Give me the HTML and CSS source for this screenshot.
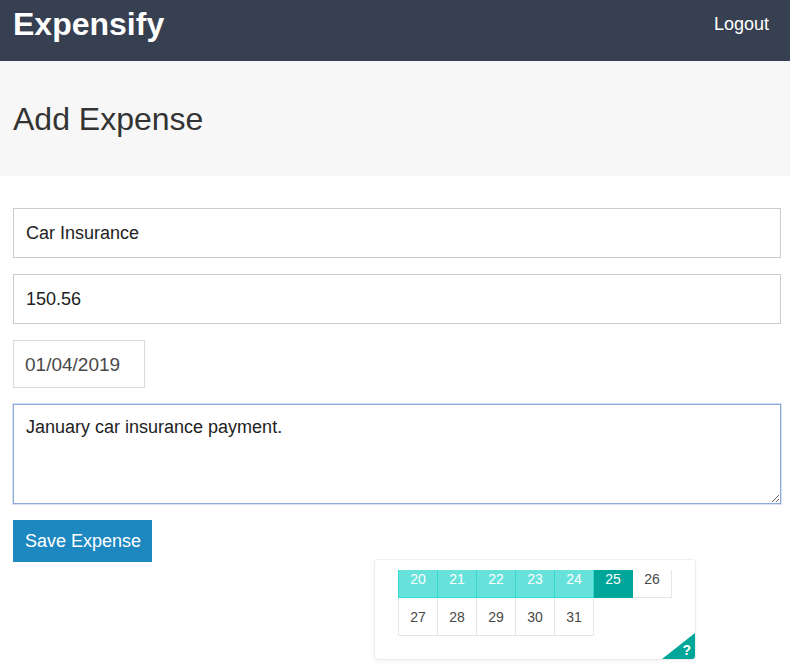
FILE: index.html
```html
<!DOCTYPE html>
<html>
<head>
<meta charset="utf-8">
<title>Expensify</title>
<link rel="stylesheet" href="styles.css">
</head>
<body>
<header class="header">
  <h1 class="brand">Expensify</h1>
  <button class="logout">Logout</button>
</header>
<div class="page-header">
  <h2 class="page-title">Add Expense</h2>
</div>
<form class="form">
  <input class="text-input" type="text" value="Car Insurance">
  <input class="text-input" type="text" value="150.56">
  <div class="date-picker">
    <input class="date-input" type="text" value="01/04/2019">
  </div>
  <textarea class="textarea">January car insurance payment.</textarea>
  <div class="actions">
    <button class="button" type="button">Save Expense</button>
  </div>
</form>
<div class="calendar">
  <div class="cal-clip">
    <table class="cal-table">
      <tr>
        <td class="day range">20</td>
        <td class="day range">21</td>
        <td class="day range">22</td>
        <td class="day range">23</td>
        <td class="day range">24</td>
        <td class="day selected">25</td>
        <td class="day">26</td>
      </tr>
      <tr>
        <td class="day">27</td>
        <td class="day">28</td>
        <td class="day">29</td>
        <td class="day">30</td>
        <td class="day">31</td>
        <td class="empty"></td>
        <td class="empty"></td>
      </tr>
    </table>
  </div>
  <div class="shortcut"><span class="shortcut-q">?</span></div>
</div>
</body>
</html>
```
FILE: styles.css
```css
html, body {
  margin: 0;
  padding: 0;
  background: #fff;
  font-family: "Liberation Sans", Arial, sans-serif;
  color: #333;
}

.header {
  height: 61px;
  box-sizing: border-box;
  background: #364051;
  display: flex;
  justify-content: space-between;
  align-items: flex-start;
  padding: 8px 21px 0 13px;
}

.brand {
  margin: 0;
  font-size: 32px;
  line-height: 32px;
  font-weight: bold;
  color: #fff;
}

.logout {
  margin-top: 7px;
  background: none;
  border: none;
  padding: 0;
  font-family: inherit;
  font-size: 18px;
  line-height: 18px;
  color: #fff;
}

.page-header {
  background: #f7f7f7;
  padding: 42px 13px 41px;
}

.page-title {
  margin: 0;
  font-size: 32px;
  line-height: 32px;
  font-weight: normal;
  color: #333;
}

.form {
  display: flex;
  flex-direction: column;
  gap: 16px;
  padding: 32px 9px 0 13px;
}

.text-input {
  height: 50px;
  box-sizing: border-box;
  border: 1px solid #cacccd;
  padding: 0 12px;
  font-family: inherit;
  font-size: 18px;
  color: #222;
  outline: none;
}

.date-picker {
  display: flex;
}

.date-input {
  width: 132px;
  height: 48px;
  box-sizing: border-box;
  border: 1px solid #dbdbdb;
  padding: 11px 11px 9px;
  font-family: inherit;
  font-size: 19px;
  line-height: 24px;
  color: #484848;
  outline: none;
}

.textarea {
  height: 100px;
  box-sizing: border-box;
  border: 1px solid #8eaadc;
  box-shadow: 0 0 0 1px rgba(142, 170, 220, 0.35);
  padding: 12px 12px;
  font-family: inherit;
  font-size: 18px;
  line-height: 21px;
  color: #222;
  outline: none;
  resize: vertical;
}

.actions {
  display: flex;
}

.button {
  height: 42px;
  background: #1c88bf;
  border: none;
  padding: 0 11px 0 12px;
  font-family: inherit;
  font-size: 18px;
  color: #fff;
}

.calendar {
  position: absolute;
  left: 375px;
  top: 560px;
  width: 320px;
  height: 99px;
  background: #fff;
  border-radius: 3px;
  box-shadow: 0 2px 6px rgba(0, 0, 0, 0.05), 0 0 0 1px rgba(0, 0, 0, 0.05);
  overflow: hidden;
}

.cal-clip {
  margin: 10px 0 0 23px;
  height: 66px;
  overflow: hidden;
}

.cal-table {
  margin-top: -11px;
  border-collapse: collapse;
  border-spacing: 0;
}

.day {
  width: 38px;
  height: 37px;
  padding: 0;
  border: 1px solid #e4e7e7;
  text-align: center;
  vertical-align: middle;
  font-size: 14px;
  color: #484848;
}

.day.range {
  background: #66e2da;
  border-color: #33dacd;
  color: #fff;
}

.day.selected {
  background: #00a699;
  border-color: #00a699;
  color: #fff;
}

.empty {
  width: 38px;
  padding: 0;
  border: none;
}

.shortcut {
  position: absolute;
  right: 0;
  bottom: 0;
  width: 0;
  height: 0;
  border-top: 26px solid transparent;
  border-right: 33px solid #00a699;
}

.shortcut-q {
  position: absolute;
  right: -29px;
  bottom: 1px;
  font-size: 14px;
  font-weight: bold;
  color: #fff;
}
```
